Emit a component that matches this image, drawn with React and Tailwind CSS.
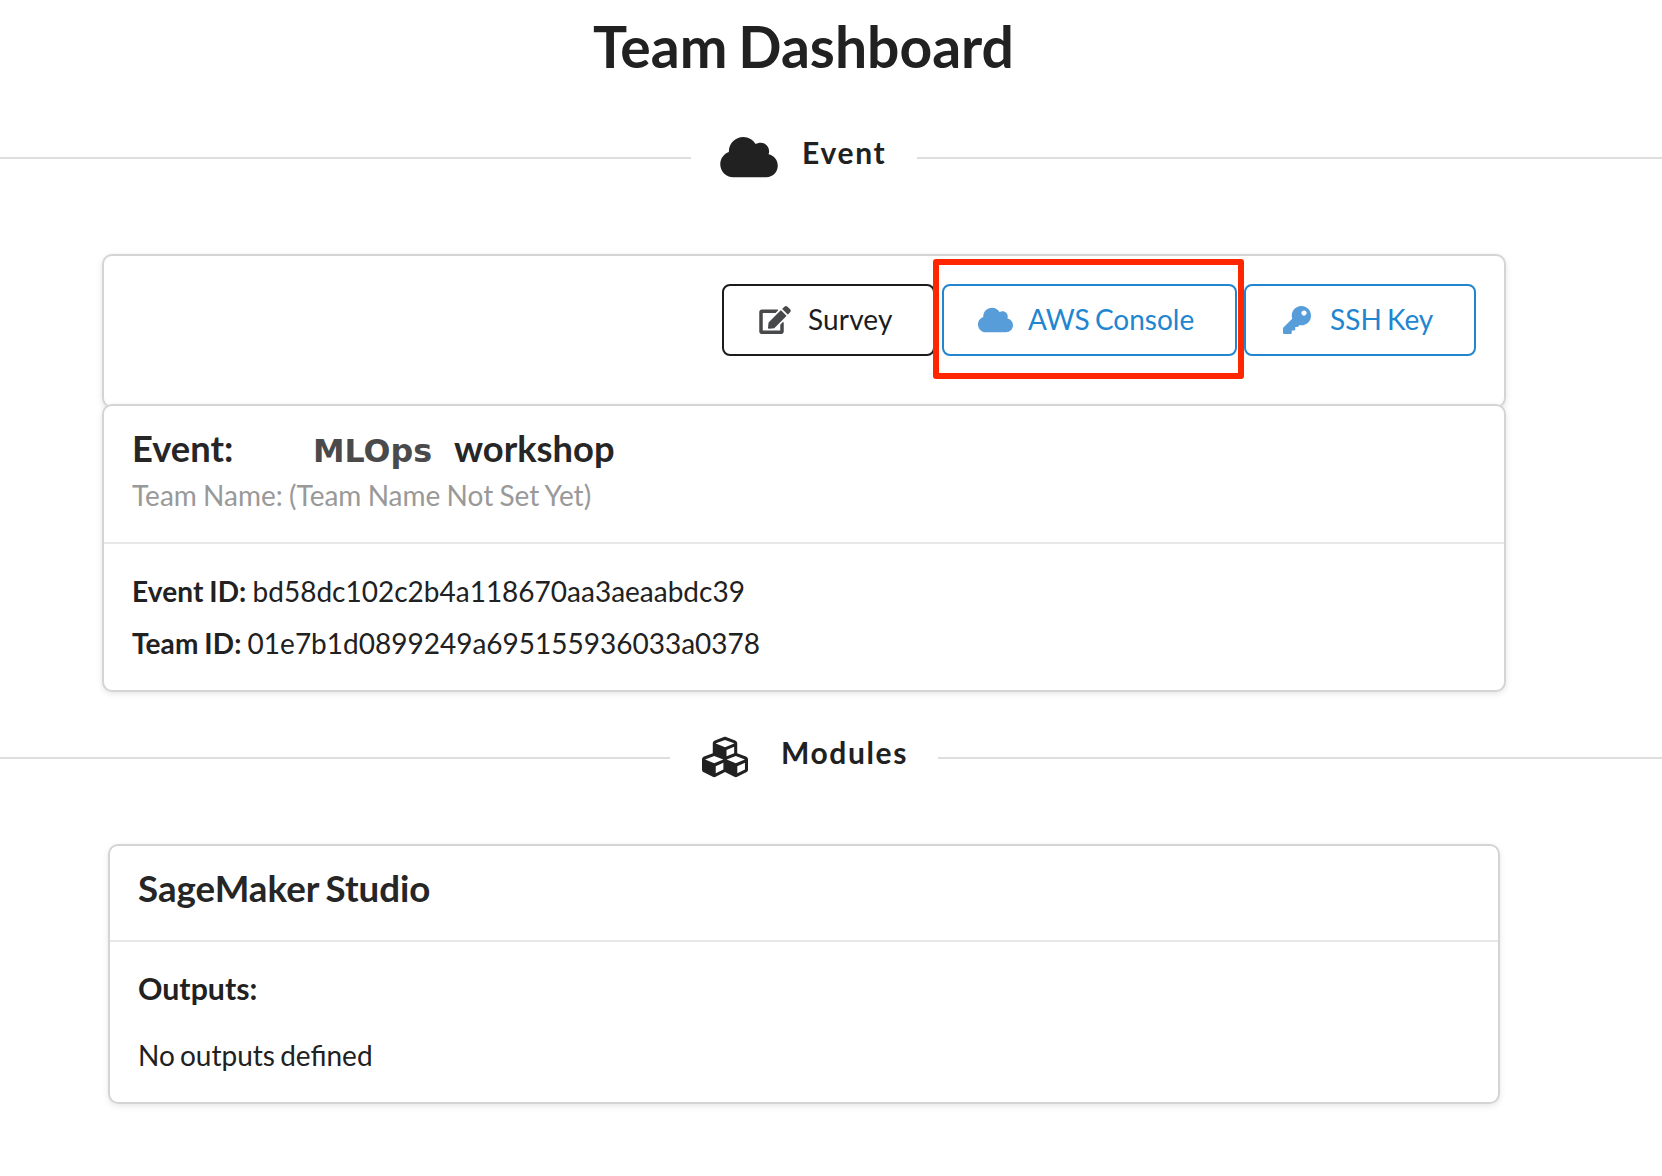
import { FaCloud, FaCubes, FaEdit, FaKey } from "react-icons/fa";

function SectionDivider({ lineClass, className, children }) {
  return (
    <div className={`flex h-[60px] ${className}`}>
      <div className={`mt-[29px] h-[2px] shrink-0 bg-[#dedede] ${lineClass}`} />
      {children}
      <div className="mt-[29px] h-[2px] flex-1 bg-[#dedede]" />
    </div>
  );
}

export default function App() {
  return (
    <div className="h-[1176px] w-[1662px] overflow-hidden bg-white font-['Lato',sans-serif] text-[28px] text-[#212121] [word-spacing:-2px]">
      <h1 className="ml-[593px] pt-[14px] text-[57px] leading-[64px] font-bold whitespace-nowrap [word-spacing:-3px]">Team Dashboard</h1>

      <SectionDivider className="mt-[50px]" lineClass="w-[691px]">
        <div className="flex w-[226px] shrink-0 pl-[29px]">
          <FaCloud className="mt-[5.5px] h-[46px] w-[58px]" />
          <h4 className="ml-[24px] pt-[4px] text-[30px] leading-[40px] font-bold tracking-[1.7px]">Event</h4>
        </div>
      </SectionDivider>

      <main>
        <section className="relative mt-[66px] ml-[102px] h-[154px] w-[1404px] rounded-[10px] border-2 border-[#d4d4d5] shadow-[0_2px_6px_0_#e6e6e6]">
          <div className="flex pt-[28px] pl-[618px]">
            <button className="flex h-[72px] w-[213px] items-center rounded-[8px] border-2 border-[#1b1c1d] pl-[35px] text-[#1b1c1d]">
              <FaEdit className="h-[28px] w-[32px] opacity-80" />
              <span className="ml-[17px] pb-[2px] leading-[40px] tracking-[0.15px]">Survey</span>
            </button>
            <button className="ml-[7px] flex h-[72px] w-[295px] items-center rounded-[8px] border-2 border-[#2185d0] pl-[34px] text-[#2185d0] [word-spacing:-2px]">
              <FaCloud className="mb-px h-[28px] w-[35px] text-[#569dd9]" />
              <span className="ml-[15px] pb-[2px] leading-[40px] whitespace-nowrap">AWS Console</span>
            </button>
            <button className="ml-[7px] flex h-[72px] w-[232px] items-center rounded-[8px] border-2 border-[#2185d0] pl-[37px] text-[#2185d0] [word-spacing:-2px]">
              <FaKey className="h-[28px] w-[28px] text-[#569dd9]" />
              <span className="ml-[19px] pb-[2px] leading-[40px] whitespace-nowrap">SSH Key</span>
            </button>
          </div>
          <div className="absolute top-[3px] left-[829px] h-[120px] w-[311px] rounded-[3px] border-[6px] border-[#ff2600]" />
        </section>

        <section className="relative -mt-[4px] ml-[102px] h-[288px] w-[1404px] rounded-[10px] border-2 border-[#d4d4d5] bg-white shadow-[0_2px_6px_0_#e6e6e6]">
          <header className="h-[138px] border-b-2 border-[#e8e8e8] pt-[20px] pl-[28px]">
            <h2 className="flex text-[36.3px] leading-[44px] font-bold whitespace-nowrap text-[#262626]">
              <span className="w-[181px]">Event:</span>
              <span className="w-[141px] pt-[3px] font-['DejaVu_Sans',sans-serif] text-[31.7px] leading-[44px] text-[#4a4a4a]">MLOps</span>
              <span>workshop</span>
            </h2>
            <p className="mt-[4px] text-[28px] leading-[36px] text-[#999999] [word-spacing:-0.9px]">Team Name: (Team Name Not Set Yet)</p>
          </header>
          <div className="pt-[21px] pl-[28px] leading-[52px] [word-spacing:-1px]">
            <p><b className="tracking-[0.1px]">Event ID:</b> bd58dc102c2b4a118670aa3aeaabdc39</p>
            <p><b className="tracking-[0.1px]">Team ID:</b> 01e7b1d0899249a695155936033a0378</p>
          </div>
        </section>

        <SectionDivider className="mt-[36px]" lineClass="w-[670px]">
          <div className="flex w-[268px] shrink-0 pl-[32px]">
            <FaCubes className="mt-[6px] h-[46px] w-[46px]" />
            <h4 className="ml-[33px] pt-[4px] text-[30px] leading-[40px] font-bold tracking-[1.6px]">Modules</h4>
          </div>
        </SectionDivider>

        <section className="mt-[56px] ml-[108px] h-[260px] w-[1392px] rounded-[10px] border-2 border-[#d4d4d5] shadow-[0_2px_6px_0_#e6e6e6]">
          <header className="h-[96px] border-b-2 border-[#e8e8e8] pt-[20px] pl-[28px]">
            <h2 className="text-[36.7px] leading-[44px] font-bold text-[#262626]">SageMaker Studio</h2>
          </header>
          <div className="pt-[26px] pl-[28px]">
            <h4 className="text-[30.3px] leading-[40px] font-bold">Outputs:</h4>
            <p className="mt-[27px] leading-[40px]">No outputs defined</p>
          </div>
        </section>
      </main>
    </div>
  );
}
